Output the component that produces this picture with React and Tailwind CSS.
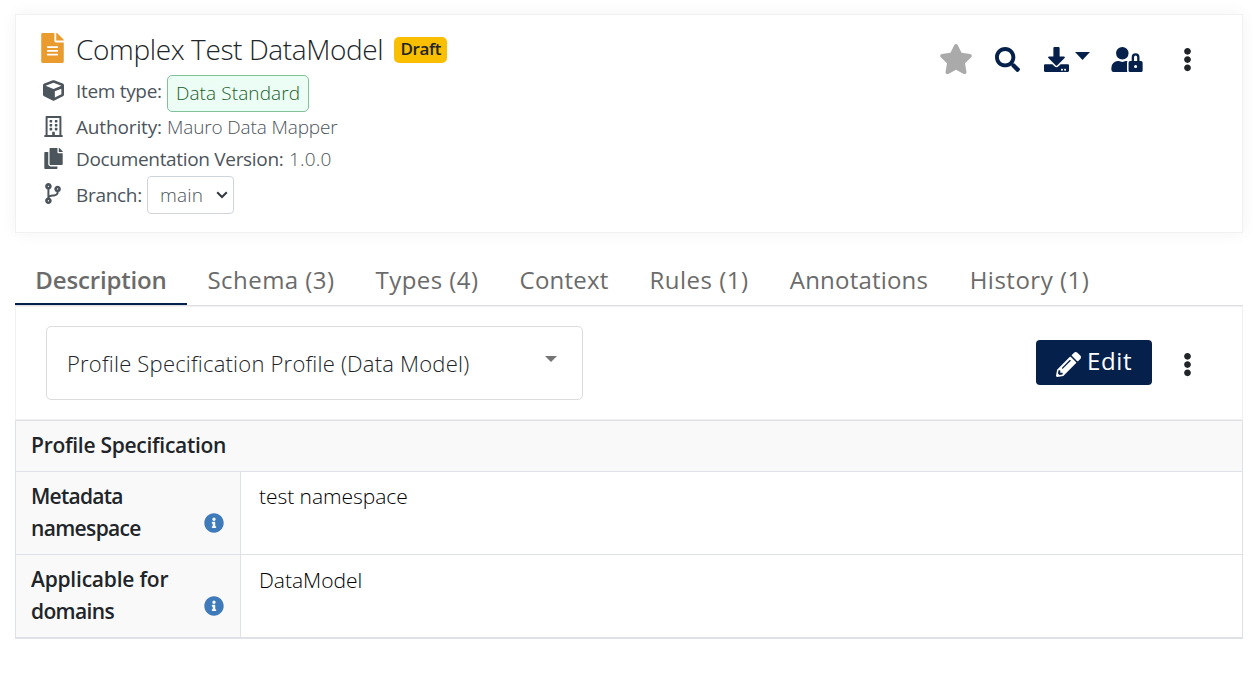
import { FaFileAlt, FaCube, FaRegBuilding, FaCopy, FaCodeBranch, FaStar, FaSearch, FaDownload, FaUserLock, FaEllipsisV, FaInfoCircle, FaPencilAlt } from "react-icons/fa";

const tabs = [
  { label: "Description", cls: "w-[172px] border-b-2 border-[#05204a] font-semibold tracking-[-0.15px]" },
  { label: "Schema (3)", cls: "w-[168px] pb-0.5 tracking-[0.45px]" },
  { label: "Types (4)", cls: "w-[144px] pb-0.5 tracking-[0.45px]" },
  { label: "Context", cls: "w-[130px] pb-0.5 tracking-[0.2px]" },
  { label: "Rules (1)", cls: "w-[140px] pb-0.5 tracking-[0.5px]" },
  { label: "Annotations", cls: "w-[180px] pb-0.5 tracking-[0.2px]" },
  { label: "History (1)", cls: "w-[161px] pb-0.5 tracking-[0.5px]" },
];

const rows = [
  {
    name: [
      { text: "Metadata", cls: "tracking-[-0.75px]" },
      { text: "namespace", cls: "tracking-[-0.65px]" },
    ],
    value: "test namespace",
    rowCls: "flex h-[83px] border-b border-[#dee2e6]",
    valueCls: "pt-2 tracking-[-0.05px]",
  },
  {
    name: [
      { text: "Applicable for", cls: "tracking-[-0.22px]" },
      { text: "domains", cls: "tracking-[-0.65px]" },
    ],
    value: "DataModel",
    rowCls: "flex h-[82px]",
    valueCls: "pt-[9px]",
  },
];

export default function App() {
  return (
    <div className="h-[676px] w-[1253px] overflow-hidden bg-white px-[15px] pt-[14px] pr-[10px] font-['Open_Sans',sans-serif] text-[#212529]">
      <header className="flex h-[219px] justify-between border border-[#f1f1f1] pl-[25px] shadow-[0_0_16px_rgba(0,0,0,0.05)]">
        <div className="flex flex-col pt-4 text-[19px] font-normal text-[#4c545c]">
          <div className="flex h-9 items-center">
            <FaFileAlt className="mb-0.5 h-[30px] w-[23px] text-[#e99b2d]" />
            <h1 className="ml-3 pb-px text-[28px] leading-[34px] font-light tracking-[-0.38px] whitespace-nowrap text-[#212529]">Complex Test DataModel</h1>
            <span className="mt-0.5 ml-[11px] flex h-[26px] w-[53px] items-center justify-center rounded-[5px] bg-[#f9bf00] pb-0.5 text-[17px] font-semibold tracking-[-0.4px] text-[#212529]">Draft</span>
          </div>
          <div className="mt-2 flex h-[37px] items-center">
            <FaCube className="mb-1.5 ml-0.5 h-[21px] w-[21px]" />
            <span className="mb-1 ml-3 w-[86px] whitespace-nowrap tracking-[-0.32px]">Item type:</span>
            <span className="ml-[5px] flex h-[37px] w-[142px] items-center justify-center rounded-[5px] border border-[#81c199] bg-[#ebfdf5] font-light tracking-[0.1px] whitespace-nowrap text-[#235e2c]">Data Standard</span>
          </div>
          <div className="flex h-8 items-center">
            <FaRegBuilding className="mb-1 ml-[3px] h-[21px] w-[19px]" />
            <span className="mb-0.5 ml-[13px] w-[86px] whitespace-nowrap tracking-[-0.15px]">Authority:</span>
            <span className="mb-0.5 ml-[5px] font-light tracking-[-0.14px]">Mauro Data Mapper</span>
          </div>
          <div className="flex h-8 items-center">
            <FaCopy className="mb-1 ml-[3px] h-[21px] w-[19px]" />
            <span className="mb-0.5 ml-[13px] w-[208px] whitespace-nowrap tracking-[-0.32px]">Documentation Version:</span>
            <span className="mb-0.5 ml-[5px] font-light tracking-[0.2px]">1.0.0</span>
          </div>
          <div className="flex h-[38px] items-center">
            <FaCodeBranch className="mb-1 ml-1 h-[21px] w-[16px]" />
            <span className="ml-[15px] w-[66px] whitespace-nowrap tracking-[-0.3px]">Branch:</span>
            <button className="ml-[5px] flex h-[38px] w-[87px] items-center rounded-[4px] border border-[#ced4da] pl-3 font-light">
              <span className="w-11 text-left tracking-[0.2px]">main</span>
              <svg className="ml-3 h-2 w-3" viewBox="0 0 12 8" fill="none" stroke="#343a40" strokeWidth="2"><path d="M1.2 1.2 6 6l4.800-4.800" /></svg>
            </button>
          </div>
        </div>
        <div className="flex h-[50px] items-center pt-[38px] pr-[50px] text-[#05204a]">
          <FaStar className="h-[32px] w-[34px] text-[#aaaaaa]" />
          <FaSearch className="ml-[22px] h-[25px] w-[25px]" />
          <FaDownload className="ml-6 h-[25px] w-[25px]" />
          <svg className="mb-1.5 ml-1.5 h-2 w-[15px]" viewBox="0 0 15 8" fill="currentColor"><path d="M0 0h15L7.500 8z" /></svg>
          <FaUserLock className="ml-[21px] h-[25px] w-8" />
          <FaEllipsisV className="ml-10 h-[25px] w-[9px] text-[#212529]" />
        </div>
      </header>

      <nav className="mt-6 flex h-[49px] border-b border-[#dddfe2] text-[24px] text-[#6b6b6b]">
        {tabs.map((t) => (
          <div key={t.label} className={"flex h-12 items-center justify-center whitespace-nowrap " + t.cls}>{t.label}</div>
        ))}
      </nav>

      <section className="flex h-[114px] items-start border border-[#f1f1f1] pt-[19px] pl-[30px]">
        <button className="flex h-[74px] w-[537px] items-center justify-between rounded-[5px] border border-[#dcdcdc] pr-[25px] pl-5 text-[22px] font-light">
          <span className="pt-px tracking-[0.21px]">Profile Specification Profile (Data Model)</span>
          <svg className="mb-2 h-1.5 w-3" viewBox="0 0 12 6" fill="#757575"><path d="M0 0h12L6 6z" /></svg>
        </button>
        <button className="mt-[14px] ml-[453px] flex h-[45px] w-[116px] items-center rounded-[4px] bg-[#05204a] pl-5 text-[24px] font-medium text-white">
          <FaPencilAlt className="mt-1 h-[25px] w-[25px]" />
          <span className="mb-1 ml-1.5 tracking-[0.6px]">Edit</span>
        </button>
        <FaEllipsisV className="mt-[26px] ml-[31px] h-[25px] w-[9px]" />
      </section>

      <section className="h-[219px] border border-b-2 border-[#dee2e6] text-[21px] leading-8">
        <h2 className="h-[51px] border-b border-[#dee2e6] bg-[#f9f9f9] pt-2 pl-[15px] font-semibold tracking-[-0.28px]">Profile Specification</h2>
        {rows.map((r) => (
          <div key={r.value} className={r.rowCls}>
            <div className="flex w-[225px] justify-between border-r border-[#dee2e6] bg-[#f9f9f9] pt-2 pr-4 pl-[15px] font-semibold">
              <div>
                {r.name.map((n) => (
                  <div key={n.text} className={n.cls}>{n.text}</div>
                ))}
              </div>
              <FaInfoCircle className="mt-[33px] h-5 w-5 text-[#3f7abb]" />
            </div>
            <div className={"pl-[18px] font-light text-black " + r.valueCls}>{r.value}</div>
          </div>
        ))}
      </section>
    </div>
  );
}
